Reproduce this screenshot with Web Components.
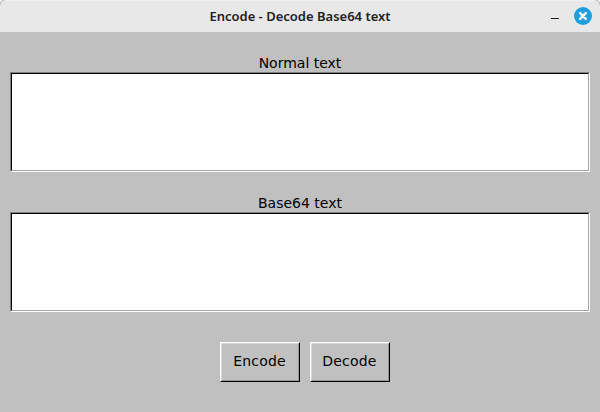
<!DOCTYPE html>
<html lang="en"><head><meta charset="utf-8"><title>Encode - Decode Base64 text</title>
<style>html,body{margin:0;height:100%;background:#fff;overflow:hidden}</style></head><body>
<codec-window></codec-window>
<script>
const define = (name, html) => customElements.define(name, class extends HTMLElement {
  constructor() {
    super();
    this.attachShadow({ mode: 'open' }).innerHTML = html;
  }
});
define('title-bar', `<style>
:host{display:grid;grid-template-columns:1fr auto 1fr;align-items:center;height:32px;box-sizing:border-box;background:#e8e8e8;color:#222;font:600 13px "Noto Sans",sans-serif;border-radius:7px 7px 0 0;box-shadow:inset 0 1px #f0f0f0,0 0 0 1px #b0b0b0}
.name{grid-column:2;white-space:nowrap}
.tools{display:flex;justify-content:flex-end;padding-right:8px}
svg{display:block}
</style><span class="name"><slot></slot></span><span class="tools">
<svg width="44" height="20" viewBox="0 0 44 20"><path d="M3 12.5h8" stroke="#202020" stroke-width="1"/><circle cx="35" cy="10" r="9" fill="#1f9ede"/><path d="M32.2 7.2l5.6 5.6M37.8 7.2l-5.6 5.6" stroke="#fff" stroke-width="2.4" stroke-linecap="round"/></svg></span>`);
define('text-field', `<style>
:host{display:block;color:#000;font:14px "DejaVu Sans",sans-serif;text-align:center}
.label{height:20px;line-height:22px}
.box{height:100px;box-sizing:border-box;background:#fff;border:1px solid;border-color:#808080 #fff #fff #808080}
.inner{height:98px;box-sizing:border-box;border:1px solid;border-color:#000 #a6a6a6 #a6a6a6 #000}
</style><div class="label"><slot></slot></div><div class="box"><div class="inner"></div></div>`);
define('push-button', `<style>
:host{display:block;width:80px;height:40px;box-sizing:border-box;border:1px solid;border-color:#fff #000 #000 #fff;color:#000;font:14px/34px "DejaVu Sans",sans-serif;letter-spacing:.2px;text-align:center}
.face{height:38px;box-sizing:border-box;border:1px solid;border-color:#d9d9d9 #969696 #969696 #d9d9d9;padding-right:1px}
</style><div class="face"><slot></slot></div>`);
define('codec-window', `<style>
:host{display:flex;flex-direction:column;height:412px;box-sizing:border-box}
main{flex:1;background:#c0c0c0;padding:20px 10px 0;display:flex;flex-direction:column;gap:20px;position:relative}
.actions{display:flex;justify-content:center;gap:10px;margin-top:10px;padding-left:10px}
</style><title-bar>Encode - Decode Base64 text</title-bar><main><text-field>Normal text</text-field><text-field>Base64 text</text-field><div class="actions"><push-button>Encode</push-button><push-button>Decode</push-button></div></main>`);
</script></body></html>
